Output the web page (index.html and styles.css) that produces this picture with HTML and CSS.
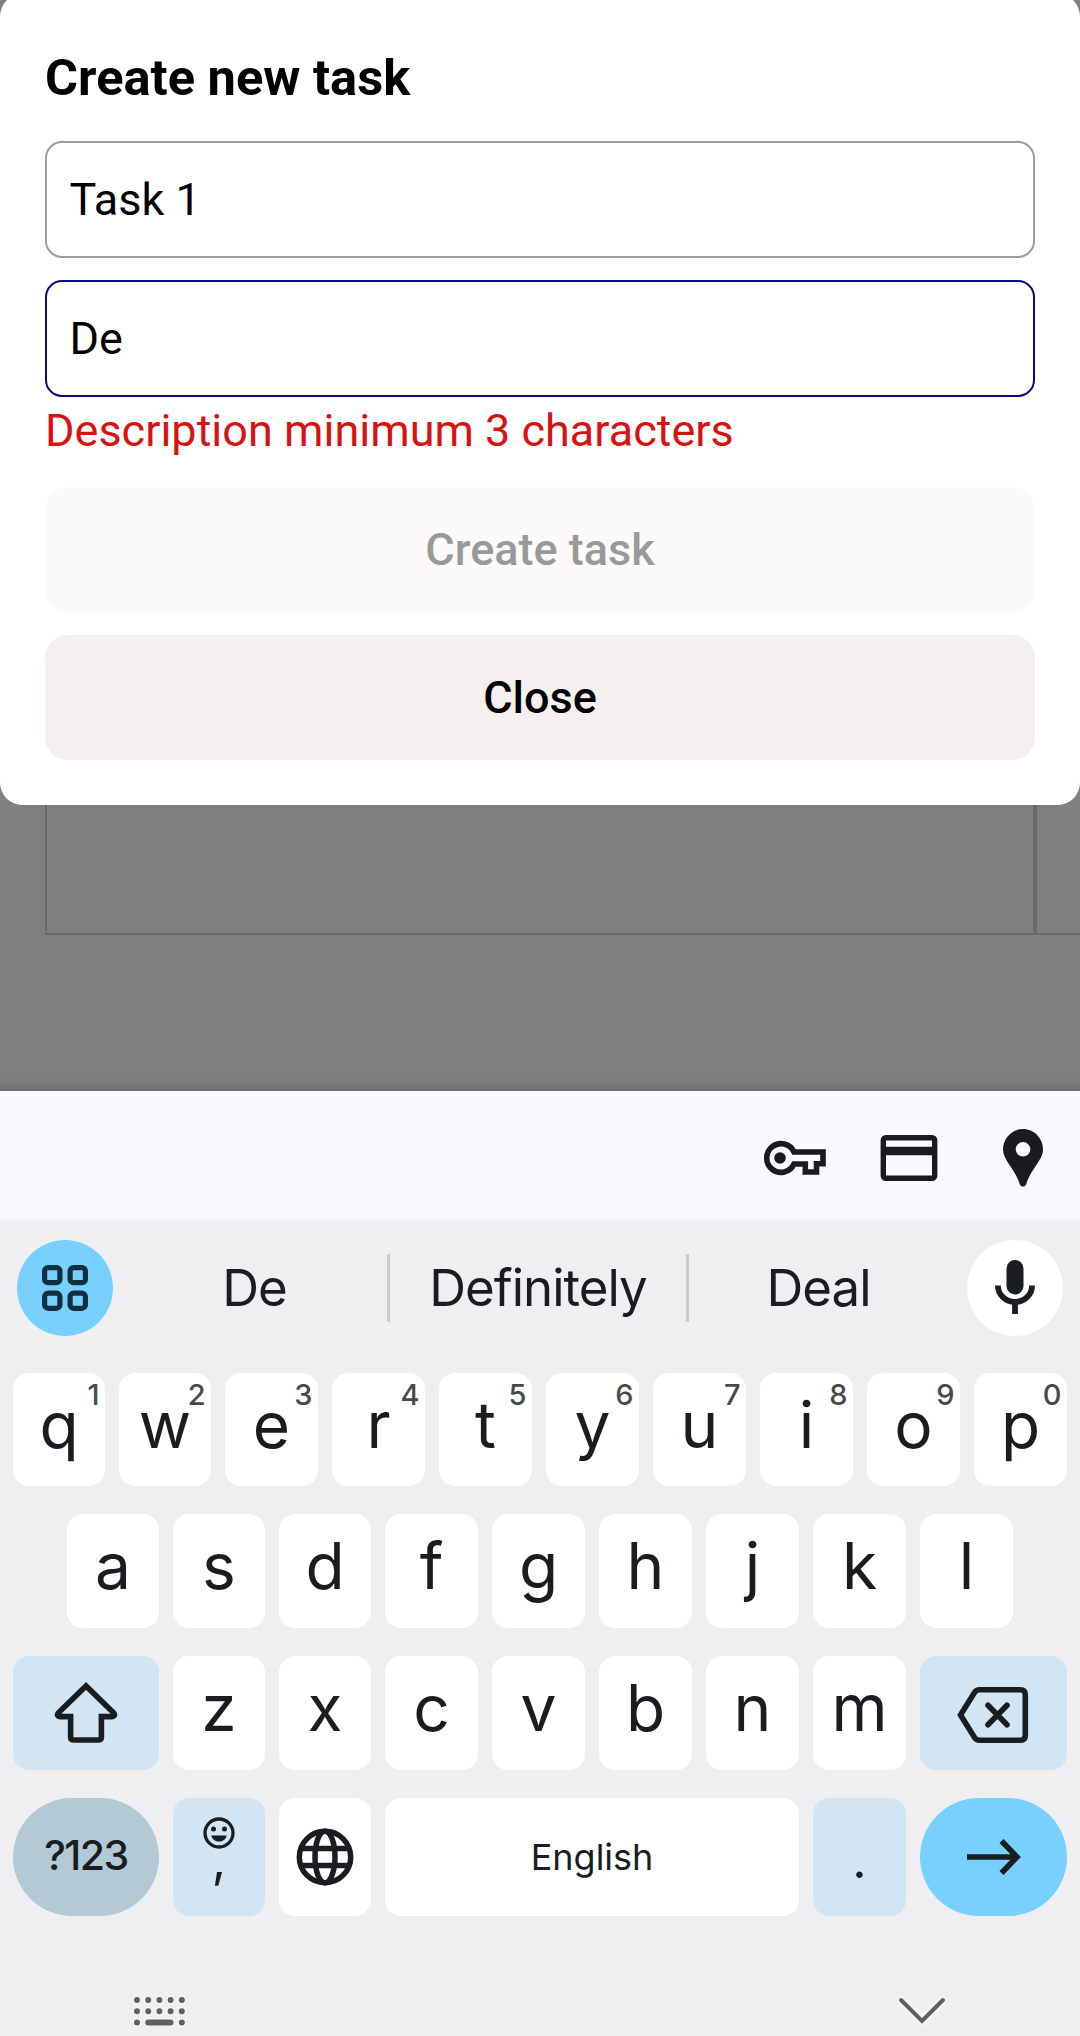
FILE: index.html
```html
<!DOCTYPE html>
<html lang="en">
<head>
<meta charset="utf-8">
<title>Create new task</title>
<link rel="stylesheet" href="styles.css">
</head>
<body>
<main class="app">
  <section class="modal">
    <h1 class="modal-title">Create new task</h1>
    <input class="field" type="text" value="Task 1" aria-label="Title">
    <input class="field field-active" type="text" value="De" aria-label="Description">
    <p class="error"><span>Description minimum 3 characters</span></p>
    <button class="btn btn-disabled">Create task</button>
    <button class="btn">Close</button>
  </section>
  <div class="board">
    <div class="column"></div>
    <div class="column column-next"></div>
  </div>
  <div class="shade"></div>
</main>

<section class="keyboard">
  <div class="autofill">
    <svg width="64" height="36" viewBox="0 0 64 36"><path fill="none" stroke="#1b1a20" stroke-width="5.6" d="M31 12A14.3 14.3 0 1 0 31 24H42.300V32H53.500V23.800H60V12Z"/><circle cx="17" cy="18" r="5.800" fill="#1b1a20"/></svg>
    <svg width="58" height="46" viewBox="0 0 58 46"><rect x="3.300" y="2.800" width="51.400" height="40.400" rx="2.500" fill="none" stroke="#1b1a20" stroke-width="5.400"/><path d="M3 16H55" stroke="#1b1a20" stroke-width="8.400"/></svg>
    <svg width="40" height="58" viewBox="0 0 40 58"><path fill="#1b1a20" fill-rule="evenodd" d="M20 0C9 0 0 9 0 20.500C0 31 12 40 16.500 54.500C17.300 58.600 22.700 58.600 23.500 54.500C28 40 40 31 40 20.500C40 9 31 0 20 0ZM20 13A7.300 7.300 0 1 1 20 27.600A7.300 7.300 0 1 1 20 13Z"/></svg>
  </div>

  <div class="suggestions">
    <div class="round round-apps">
      <svg width="46" height="46" viewBox="0 0 46 46" fill="none" stroke="#10303f" stroke-width="5.200"><rect x="2.600" y="2.600" width="15.300" height="15.100" rx="3.500"/><rect x="28.100" y="2.600" width="15.300" height="15.100" rx="3.500"/><rect x="2.600" y="28.200" width="15.300" height="15.100" rx="3.500"/><rect x="28.100" y="28.200" width="15.300" height="15.100" rx="3.500"/></svg>
    </div>
    <div class="words">
      <span class="word word-first">De</span>
      <span class="word word-main">Definitely</span>
      <span class="word word-last">Deal</span>
    </div>
    <div class="round round-mic">
      <svg width="40" height="58" viewBox="0 0 40 58"><rect x="11.500" y="1" width="17" height="34.500" rx="8.500" fill="#191d1f"/><path d="M2.900 26.500A17.100 16.500 0 0 0 37.100 26.500M20 43V55" fill="none" stroke="#191d1f" stroke-width="5.800"/></svg>
    </div>
  </div>

  <div class="rows">
    <div class="row">
      <div class="key key-slim">q<sup>1</sup></div><div class="key key-slim">w<sup>2</sup></div><div class="key">e<sup>3</sup></div><div class="key">r<sup>4</sup></div><div class="key">t<sup>5</sup></div><div class="key">y<sup>6</sup></div><div class="key">u<sup>7</sup></div><div class="key">i<sup>8</sup></div><div class="key">o<sup>9</sup></div><div class="key">p<sup>0</sup></div>
    </div>
    <div class="row row-home">
      <div class="key key-slim">a</div><div class="key key-slim">s</div><div class="key key-slim">d</div><div class="key">f</div><div class="key">g</div><div class="key">h</div><div class="key">j</div><div class="key">k</div><div class="key">l</div>
    </div>
    <div class="row">
      <div class="key key-wide key-tint">
        <svg width="64" height="62" viewBox="0 0 64 62"><path d="M32 4L4.200 31Q2.200 34.200 6 34.600H16.600V55Q16.600 58 19.800 58H44.200Q47.400 58 47.400 55V34.600H58Q61.800 34.200 59.800 31Z" fill="none" stroke="#191d1f" stroke-width="5.600"/></svg>
      </div>
      <div class="key key-slim">z</div><div class="key key-slim">x</div><div class="key">c</div><div class="key">v</div><div class="key">b</div><div class="key">n</div><div class="key">m</div>
      <div class="key key-last key-tint">
        <svg class="icon-back" width="72" height="58" viewBox="0 0 72 58" fill="none" stroke="#191d1f" stroke-width="5.600"><path d="M3.500 29L17.500 6.500Q19.300 3.800 22.500 3.800H63.500Q68.300 3.800 68.300 8.800V49.200Q68.300 54.200 63.500 54.200H22.500Q19.300 54.200 17.500 51.500Z"/><path d="M31 19.200L50 38.800M50 19.200L31 38.800" stroke-linecap="round"/></svg>
      </div>
    </div>
    <div class="row row-bottom">
      <div class="key key-wide key-pill key-symbols"><span>?123</span></div>
      <div class="key key-slim key-tint key-comma">
        <svg width="32" height="32" viewBox="0 0 32 32"><circle cx="16" cy="16" r="14" fill="none" stroke="#191d1f" stroke-width="3.300"/><circle cx="10.500" cy="12" r="2.500" fill="#191d1f"/><circle cx="21.500" cy="12" r="2.500" fill="#191d1f"/><path d="M8.300 18.500H23.700C22 26.500 10 26.500 8.300 18.500Z" fill="#191d1f"/></svg>
        <span>,</span>
      </div>
      <div class="key key-slim key-globe">
        <svg width="58" height="58" viewBox="0 0 58 58" fill="none" stroke="#191d1f" stroke-width="5.500"><circle cx="29" cy="29" r="25.700"/><ellipse cx="29" cy="29" rx="10" ry="25.700"/><path d="M4.500 20.500H53.500M4.500 37.500H53.500"/></svg>
      </div>
      <div class="key key-space"><span>English</span></div>
      <div class="key key-tint key-dot"><span>.</span></div>
      <div class="key key-last key-pill key-enter">
        <svg width="54" height="36" viewBox="0 0 54 36" fill="none" stroke="#191d1f" stroke-width="5.600"><path d="M0 18H49M34.500 2L50 18L34.500 34"/></svg>
      </div>
    </div>
  </div>

  <div class="navbar">
    <svg width="56" height="34" viewBox="0 0 56 34"><g class="halo"><path d="M5 5h0M16.200 5h0M27.400 5h0M38.600 5h0M49.800 5h0M5 16.300h0M16.200 16.300h0M27.400 16.300h0M38.600 16.300h0M49.800 16.300h0M5 27.600h0M16.200 27.600H38.600M49.800 27.600h0"/></g><g class="mark"><path d="M5 5h0M16.200 5h0M27.400 5h0M38.600 5h0M49.800 5h0M5 16.300h0M16.200 16.300h0M27.400 16.300h0M38.600 16.300h0M49.800 16.300h0M5 27.600h0M16.200 27.600H38.600M49.800 27.600h0"/></g></svg>
    <svg width="52" height="34" viewBox="0 0 52 34"><path class="halo" d="M5 5L26 26L47 5"/><path class="mark mark-thin" d="M5 5L26 26L47 5"/></svg>
  </div>
</section>
</body>
</html>
```
FILE: styles.css
```css
* { box-sizing: border-box; }

body {
  margin: 0;
  width: 1080px;
  height: 2036px;
  overflow: hidden;
  display: flex;
  flex-direction: column;
  background: #efeff1;
  font-family: Roboto, sans-serif;
}

svg { display: block; flex: none; }

.app {
  height: 1091px;
  flex: none;
  display: flex;
  flex-direction: column;
  background: #7f7f7f;
  overflow: hidden;
}

.modal {
  flex: none;
  height: 811px;
  margin-top: -6px;
  padding: 45px;
  border-radius: 22.5px;
  background: #fff;
  display: flex;
  flex-direction: column;
}

.modal-title {
  margin: 0 0 24px;
  font-size: 50.600px;
  line-height: 78px;
  font-weight: 700;
  color: #000;
}

.field {
  flex: none;
  width: 100%;
  height: 117px;
  margin: 0 0 22px;
  padding: 0 22.500px;
  border: 2px solid #9a9ea2;
  border-radius: 17px;
  background: #fff;
  font: 400 45px Roboto, sans-serif;
  color: #000;
  outline: none;
}

.field-active {
  margin-bottom: 0;
  border-color: #0c0c80;
}

.error {
  margin: 0 0 23px;
  font-size: 45px;
  line-height: 67px;
  color: #d81212;
  white-space: nowrap;
}

.btn {
  flex: none;
  height: 125px;
  padding: 0;
  border: 0;
  border-radius: 22.500px;
  background: #f3f0ef;
  font: 500 45px Roboto, sans-serif;
  color: #000;
}

.btn-disabled {
  margin-bottom: 23px;
  background: #fbf9fa;
  color: #999;
}

.board {
  flex: none;
  display: flex;
  height: 130px;
  padding-left: 45px;
}

.column {
  flex: none;
  width: 990px;
  border: 2px solid #6a6a6c;
  border-top: 0;
}

.column-next { width: 45px; border-right: 0; }

.shade {
  margin-top: auto;
  height: 14px;
  background: linear-gradient(#7f7f7f, #7a7a7a 50%, #6e6e6e);
}

.keyboard {
  flex: 1;
  display: flex;
  flex-direction: column;
  font-family: Inter, sans-serif;
  color: #191d1f;
}

.autofill {
  height: 133px;
  padding: 0 37px 0 0;
  display: flex;
  justify-content: flex-end;
  align-items: center;
  background: linear-gradient(#faf9ff 126px, #efeff1 133px);
}

.autofill svg:nth-child(2) { margin: 0 65px 0 53px; }

.suggestions {
  height: 128px;
  padding: 0 17px;
  display: flex;
  align-items: center;
}

.round {
  flex: none;
  width: 96px;
  height: 96px;
  border-radius: 50%;
  display: flex;
  align-items: center;
  justify-content: center;
}

.round-apps { background: #77d0ff; }
.round-mic { background: #fff; }

.words {
  flex: 1;
  height: 68px;
  display: flex;
  padding-right: 19px;
}

.word {
  text-align: center;
  font-size: 51px;
  line-height: 68px;
  letter-spacing: -1px;
}

.word-first { width: 274px; padding-left: 9px; }
.word-main { width: 302px; border: solid #cbcbcd; border-width: 0 3px; }
.word-last { flex: 1; }

.rows {
  padding: 21px 13px 0;
  display: flex;
  flex-direction: column;
  gap: 28px;
}

.row {
  height: 114px;
  display: flex;
  gap: 14px;
}

.row:first-child { height: 113px; }
.row-home { padding: 0 54px; }
.row-bottom { height: 118px; }

.key {
  flex: 0 0 93px;
  position: relative;
  display: flex;
  justify-content: center;
  border-radius: 16px;
  background: #fff;
  font-size: 64px;
  line-height: 103px;
}

.key sup {
  position: absolute;
  top: 2px;
  right: 6px;
  font-size: 29px;
  line-height: 39px;
  font-weight: 500;
  letter-spacing: -0.500px;
  color: #474a4b;
}

.key-slim { flex-basis: 92px; }
.key-wide { flex-basis: 146px; align-items: center; }
.key-last { flex-basis: 147px; align-items: center; }
.key-globe { align-items: center; }
.key-tint { background: #d2e5f4; }
.key-pill { border-radius: 59px; }
.icon-back { margin: 4px 2px 0 0; }

.key-symbols {
  background: #b4c9d6;
  font-size: 41px;
  line-height: 60px;
  font-weight: 500;
  letter-spacing: -1.500px;
  padding-bottom: 4px;
}

.key-comma,
.key-dot {
  font-size: 50px;
  line-height: 20px;
}

.key-comma {
  flex-direction: column;
  align-items: center;
  justify-content: flex-start;
  padding-top: 19px;
}

.key-dot { padding-top: 52px; }

.key-space {
  flex: 1;
  align-items: center;
  font-size: 36px;
  line-height: 50px;
}

.key-enter { background: #77d0ff; }

.navbar {
  margin-top: 79px;
  padding: 0 132px;
  display: flex;
  justify-content: space-between;
}

.halo, .mark {
  fill: none;
  stroke: #606060;
  stroke-width: 6px;
  stroke-linecap: round;
}

.halo { stroke: #f5f5f6; stroke-width: 9px; }
.mark-thin { stroke-width: 4px; }
```
